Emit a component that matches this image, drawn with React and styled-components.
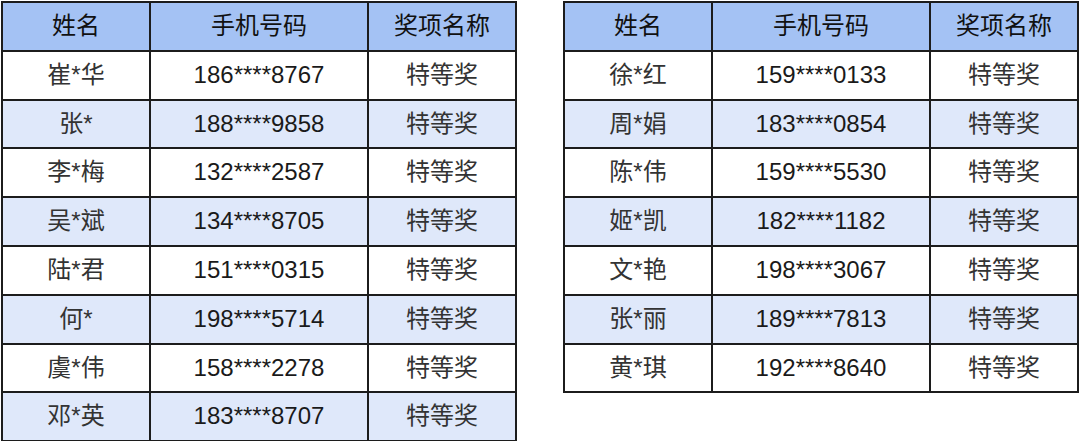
import styled, { createGlobalStyle } from 'styled-components';

const GlobalStyle = createGlobalStyle`
    body {
        margin: 0;
        background: #ffffff;
        font-family: "Liberation Sans", "Noto Sans CJK SC", sans-serif;
    }
`

const Page = styled.div`
    display: flex;
    align-items: flex-start;
    gap: 46px;
    padding: 1px 0 0 1px;
`

const Table = styled.table`
    width: 514px;
    table-layout: fixed;
    border-collapse: collapse;
    border: 2px solid #1c1c1c;
`

const HeadCell = styled.th`
    height: 46.8px;
    padding: 0;
    background: #a4c2f4;
    border: 2px solid #1c1c1c;
    font-weight: 400;
    font-size: 24px;
    line-height: 1.2;
    color: #111111;
    text-align: center;
`

const Row = styled.tr`
    background: ${props => props.$alt ? '#dfe8fa' : '#ffffff'};
`

const Cell = styled.td`
    height: 46.8px;
    padding: 0;
    border: 2px solid #1c1c1c;
    font-size: 24px;
    line-height: 1.2;
    color: ${props => props.$num ? '#1a1a1a' : '#333333'};
    text-align: center;
`

const leftRows = [
    ['崔*华', '186****8767'],
    ['张*', '188****9858'],
    ['李*梅', '132****2587'],
    ['吴*斌', '134****8705'],
    ['陆*君', '151****0315'],
    ['何*', '198****5714'],
    ['虞*伟', '158****2278'],
    ['邓*英', '183****8707'],
]

const rightRows = [
    ['徐*红', '159****0133'],
    ['周*娟', '183****0854'],
    ['陈*伟', '159****5530'],
    ['姬*凯', '182****1182'],
    ['文*艳', '198****3067'],
    ['张*丽', '189****7813'],
    ['黄*琪', '192****8640'],
]

function WinnerTable({ rows }) {
    return (
        <Table>
            <colgroup>
                <col style={{ width: 148 }} />
                <col style={{ width: 218 }} />
                <col style={{ width: 148 }} />
            </colgroup>
            <thead>
                <tr>
                    <HeadCell>姓名</HeadCell>
                    <HeadCell>手机号码</HeadCell>
                    <HeadCell>奖项名称</HeadCell>
                </tr>
            </thead>
            <tbody>
                {rows.map(([name, phone], i) => (
                    <Row key={phone} $alt={i % 2 === 1}>
                        <Cell>{name}</Cell>
                        <Cell $num>{phone}</Cell>
                        <Cell>特等奖</Cell>
                    </Row>
                ))}
            </tbody>
        </Table>
    )
}

export default function App() {
    return (
        <>
            <GlobalStyle />
            <Page>
                <WinnerTable rows={leftRows} />
                <WinnerTable rows={rightRows} />
            </Page>
        </>
    )
}
